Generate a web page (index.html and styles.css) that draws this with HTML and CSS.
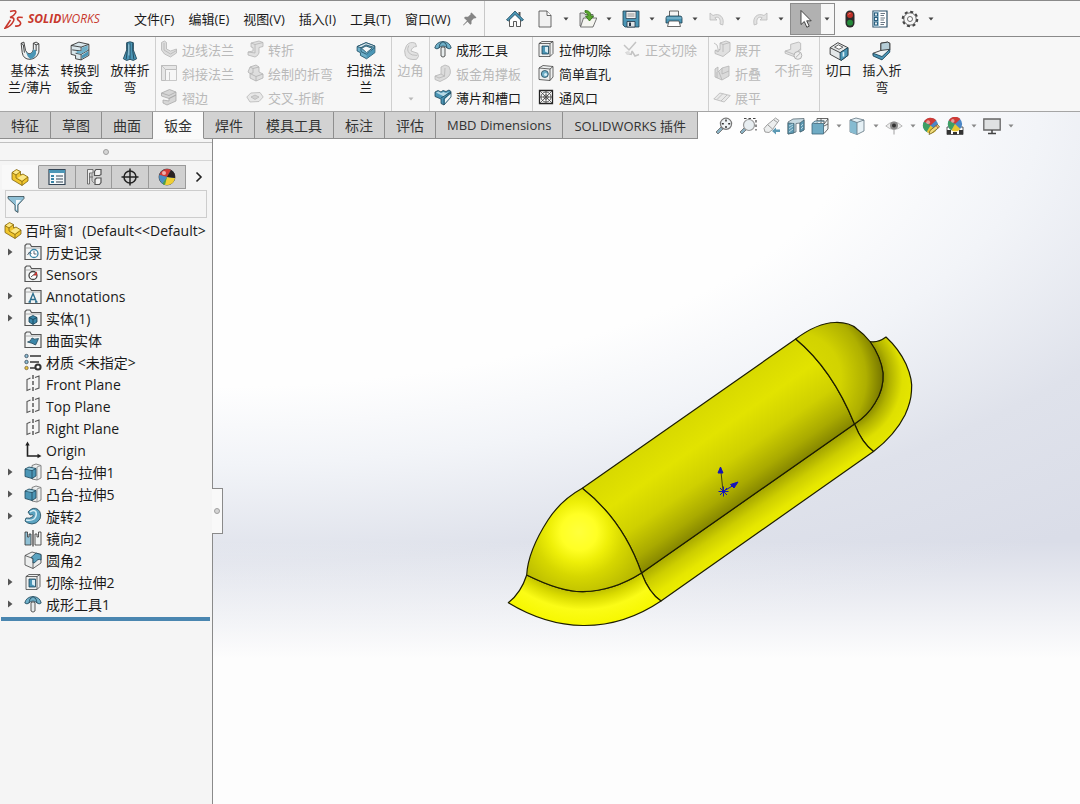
FILE: index.html
```html
<!DOCTYPE html>
<html lang="zh-CN">
<head>
	<meta charset="utf-8">
	<meta name="viewport" content="width=device-width, initial-scale=1">
	<title>SOLIDWORKS</title>
	<link rel="stylesheet" href="styles.css">
</head>
<body>
	<!-- icon sprite -->
	<svg class="sprite" aria-hidden="true">
		<symbol id="caret" viewBox="0 0 8 8"><path d="M1.500 2.500h5L4 5.500z" fill="currentColor"/></symbol>
		<symbol id="expand" viewBox="0 0 8 8"><path d="M2 .5v7L6.500 4z" fill="#555"/></symbol>

		<symbol id="pin" viewBox="0 0 18 18"><path d="M10.500 2.500l5 5-1.500 1-1-.2-2.500 2.500v3l-1.200 1-2.800-3L2.500 15.500 2 15l4-4.200-3-2.800 1-1.300h3L9.700 4.300 9.500 3.300z" fill="#858585"/></symbol>
		<symbol id="home" viewBox="0 0 18 18"><path d="M3.500 9v7.500h4v-5h3v5h4V9L9 3.500z" fill="#fff" stroke="#333"/><path d="M12.500 2h2v4.500l-2-2z" fill="#555"/><path d="M.5 9.800L9 1l8.500 8.800-1.800 1.200L9 4.500 2.300 11z" fill="#4b96b6" stroke="#1d475c"/></symbol>
		<symbol id="doc" viewBox="0 0 18 18"><path d="M3 1h8l4 4.500V17H3z" fill="#f1f1f1" stroke="#444"/><path d="M11 1v4.500h4" fill="#fff" stroke="#444"/></symbol>
		<symbol id="open" viewBox="0 0 18 18"><path d="M1 3h4l1 1.500h8V16H1z" fill="#ddd" stroke="#555"/><path d="M4.500 8h13.300L14 17H1.500z" fill="#f5f5f0" stroke="#555"/><path d="M6 .5c4 0 6 2 6 5.500h2.500L10.500 11 6.500 6H9c0-2-1-3-3-3.500z" fill="#5aa62e" stroke="#2f6f14"/></symbol>
		<symbol id="save" viewBox="0 0 18 18"><path d="M1 1h16v16H3l-2-2z" fill="#4b96b6" stroke="#1d3c4c"/><path d="M4 1.500h10v7H4z" fill="#f2f2f2" stroke="#345"/><path d="M5.500 4h7M5.500 6h7" stroke="#777"/><path d="M5 11.500h8V17H5z" fill="#dce3e6" stroke="#234"/><path d="M7 12.500h2V16H7z" fill="#234"/></symbol>
		<symbol id="print" viewBox="0 0 18 18"><path d="M4.500 1h9v6h-9z" fill="#f4f4f4" stroke="#444"/><path d="M1 8q0-2 2-2h12q2 0 2 2v5H1z" fill="#4b96b6" stroke="#1d3c4c"/><path d="M1.500 8h15" stroke="#a7d0e0"/><path d="M4 11h10l1.500 5.500h-13z" fill="#fff" stroke="#444"/></symbol>
		<symbol id="undo" viewBox="0 0 18 18"><path d="M2 3v7h7L6.800 7.800C10 6 13 8 12 14l2.800 1C17 7 11 2.500 5 5.500z" fill="#e2e2e2" stroke="#bbb"/></symbol>
		<symbol id="redo" viewBox="0 0 18 18"><path d="M16 3v7H9l2.200-2.200C8 6 5 8 6 14l-2.800 1C1 7 7 2.500 13 5.500z" fill="#e2e2e2" stroke="#bbb"/></symbol>
		<symbol id="cursor" viewBox="0 0 18 18"><path d="M4 .5v14l3.300-3 2.500 5.700 2.400-1-2.500-5.400h4.500z" fill="#fff" stroke="#222"/></symbol>
		<symbol id="traffic" viewBox="0 0 18 18"><rect x="4.500" y=".5" width="9" height="17" rx="4.500" fill="#2a2a2a"/><circle cx="9" cy="5" r="3" fill="#c03028"/><circle cx="9" cy="12.800" r="3" fill="#258a3a"/><path d="M7.500 4.500a1.800 1.800 0 012-1" stroke="#eba39e" fill="none"/></symbol>
		<symbol id="options" viewBox="0 0 18 18"><path d="M2 1h14v16H2z" fill="#fff" stroke="#2b4f68" stroke-width="1.200"/><path d="M2.500 1.500h5.500v15H2.500z" fill="#a8cfe0"/><path d="M3.500 3h3v3h-3zM3.500 7.500h3v3h-3zM3.500 12h3v3h-3z" fill="#fff" stroke="#2b5f7e" stroke-width="1.200"/><path d="M9.500 3.500H14M9.500 5.500H13M9.500 8H14M9.500 10H13M9.500 12.500H14M9.500 14.500H13" stroke="#456"/></symbol>
		<symbol id="gear" viewBox="0 0 18 18"><circle cx="9" cy="9" r="7.200" fill="none" stroke="#444" stroke-width="2.200" stroke-dasharray="3 2.650"/><circle cx="9" cy="9" r="6.200" fill="#f7f7f7" stroke="#444"/><circle cx="9" cy="9" r="2.500" fill="#fff" stroke="#444"/></symbol>

		<symbol id="base-flange" viewBox="0 0 18 18"><path d="M1 2l2.500-1L5 8.500q1.500 3.500 4 3 3-1 3-4V2l2.500-1L17 2.500V10q-2 6-8 6.500-6 0-7-6z" fill="#eef2f3" stroke="#333"/><path d="M5 9q2 3.500 4 2.500 3-1 3-4l2.500 1q.5 6-5 8L7 14z" fill="#4b96b6"/><path d="M12 2l2.500 1.500V9M14.500 3.500L17 2.500M1 2l2 1.500 1 7" fill="none" stroke="#333"/></symbol>
		<symbol id="convert" viewBox="0 0 18 18"><path d="M1 4l7-3 9 2v10l-7 4-5-1v-3l-4-1z" fill="#d9e6eb" stroke="#333"/><path d="M1 4l9 1.500 7-2.500M10 5.500V9L2 8M5 11l5 1 7-4M10 12v5" fill="none" stroke="#333"/><path d="M10.500 6l5.500-2v4l-5.500 3.500L6 11v-2h4.500z" fill="#6fb0c9"/><path d="M10.500 13l6-4v3.500l-6 3.500z" fill="#4b96b6"/></symbol>
		<symbol id="loft" viewBox="0 0 18 18"><path d="M6 1.500q3-1.500 6 0V8l3 8-3 1.500-3-1-3 1L3 16l3-8z" fill="#4b96b6" stroke="#1f4558"/><path d="M6.500 2v7l-1 7.500M9 2v14M11.500 2v7l1 7.500" stroke="#1f4558" fill="none"/><path d="M8 3v10" stroke="#b9dbe7"/></symbol>
		<symbol id="swept" viewBox="0 0 18 18"><path d="M1 5l8-3.500 8 3v6L9.500 16 4 13v-2.500L1 9z" fill="#6fb0c9" stroke="#24556b"/><path d="M1 5l8-3.500 8 3-1.500 1-6.500-2L4.500 6z" fill="#dcebf1" stroke="#24556b"/><path d="M4.500 6v3.500l5 2.500 7.500-6" fill="none" stroke="#24556b"/><path d="M5 6.500l4-2 5.500 2-5 4z" fill="#f4f8f9" stroke="#24556b"/><path d="M9.500 12l7-5v3.500l-7 5z" fill="#4b96b6"/></symbol>
		<symbol id="forming" viewBox="0 0 18 18"><path d="M.8 8Q2 2 9 1.500 16 2 17.200 8q-2 1.800-4.200 0-1.500-2-4-2T5 8Q3 9.800.8 8z" fill="#6fb0c9" stroke="#1f4558"/><path d="M5 8q0-5 4-6.300Q13 3 13 8" fill="none" stroke="#1f4558"/><path d="M7 7.500q2-1.200 4 0V16q-2 2.300-4 0z" fill="#e6ebec" stroke="#333"/></symbol>
		<symbol id="tab-slot" viewBox="0 0 18 18"><path d="M1 4l3-1.500L7 4l2-1.500 3 1L15 2l2 1.500V9l-7 8-3-1.500V11L1 8.500z" fill="#4b96b6" stroke="#1f4558"/><path d="M2 4.500l2.500-1L7 5l2.500-1 2.500 1 3-1.500-5 5z" fill="#b7d9e6"/><path d="M7 10l10-6M10 10.500V17M10 10.500L17 5" stroke="#1f4558" fill="none"/><path d="M11 11l5.500-5v3L11 15z" fill="#f0f4f5"/></symbol>
		<symbol id="cut-extrude" viewBox="0 0 18 18"><path d="M2 3.500L5 1.500h11v12l-3 3H2z" fill="#eef0f0" stroke="#444"/><path d="M2 3.500h11v13M13 3.500l3-2" fill="none" stroke="#444"/><path d="M5 6h6.500v8H5z" fill="#4b96b6" stroke="#1f4558"/><path d="M8 7h3v6L8 11.500z" fill="#d8eef6"/></symbol>
		<symbol id="hole" viewBox="0 0 18 18"><path d="M2 4l4-2.500 10 1V13l-3 3.500-11-1z" fill="#eef0f0" stroke="#444"/><path d="M2 4l11 1v11.500M13 5l3-2.500" fill="none" stroke="#444"/><circle cx="7.800" cy="10" r="3.500" fill="#6fb0c9" stroke="#1f4558"/><circle cx="8.600" cy="10.500" r="1.500" fill="#d8eef6"/></symbol>
		<symbol id="vent" viewBox="0 0 18 18"><path d="M2.500 2.500h13v13h-13z" fill="#fff" stroke="#222" stroke-width="1.300"/><circle cx="9" cy="9" r="5" fill="none" stroke="#333"/><circle cx="9" cy="9" r="2.200" fill="none" stroke="#333"/><path d="M2.500 9h13M9 2.500v13M2.500 2.500l13 13M15.500 2.500l-13 13" stroke="#444"/></symbol>
		<symbol id="rip" viewBox="0 0 18 18"><path d="M1 6l7-4.500L17 6v7l-6 4.500L1 12z" fill="#e4e7e8" stroke="#333"/><path d="M1 6l9 4.500L17 6" fill="none" stroke="#333"/><path d="M10 10.500L17 6v7l-6 4.500-1-1z" fill="#4b96b6" stroke="#1f4558"/><path d="M5 5.500l3.500-2 4 2-3.500 2z" fill="#fff" stroke="#555"/><path d="M13 10v4" stroke="#d8eef6" stroke-width="1.500"/></symbol>
		<symbol id="insert-bend" viewBox="0 0 18 18"><path d="M8 2l6-1 2 1v6l-7 8-8-3.500V11l7-2.500z" fill="#f0f3f4" stroke="#333"/><path d="M8 2l6-1 2 1v5.500L8 8.500z" fill="#b5cdd7" stroke="#333"/><path d="M1 11l8 3 7-6.500V10l-7 7-8-3.500z" fill="#4b96b6" stroke="#1f4558"/></symbol>

		<!-- greyed commands -->
		<symbol id="d-edge" viewBox="0 0 18 18"><path d="M1.500 2.500l3-1.500 2 1.500V9l4 2 6-2v4l-6 4-6-3-3-4z" fill="#dcdcdc" stroke="#b5b5b5"/><path d="M4 3v7l6.500 4 6-3.500" stroke="#b5b5b5" fill="none"/></symbol>
		<symbol id="d-miter" viewBox="0 0 18 18"><path d="M1.500 1.500h15v4h-11v11h-4z" fill="#e6e6e6" stroke="#b0b0b0"/><path d="M1.500 1.500l4 4M9.500 8v8.500M16.500 5.500v11h-11" stroke="#bbb" fill="none"/></symbol>
		<symbol id="d-hem" viewBox="0 0 18 18"><path d="M1.500 5l8-3.500L16 4v3l-7 3.500L1.500 8zM9 10.500L16 7v6l-9 4-4-2v-3l6 1z" fill="#d6d6d6" stroke="#aaa"/><path d="M1.500 5L9 7.500 16 4" stroke="#aaa" fill="none"/></symbol>
		<symbol id="d-jog" viewBox="0 0 18 18"><path d="M5 3l8-2 4 1.500v4l-4 1V13q-1 3-4 4l-7-2v-3l5-1V7.500L5 7z" fill="#e0e0e0" stroke="#b5b5b5"/><path d="M5 3l4 1.500L17 2.500M9 4.500V13l-7-1" stroke="#b5b5b5" fill="none"/></symbol>
		<symbol id="d-sketch" viewBox="0 0 18 18"><path d="M4 3l6-2 3 2v5l4 2v4l-7 3-6-3V9.500L2 8z" fill="#dedede" stroke="#b0b0b0"/><path d="M4 3l3 1.500L13 3M7 4.500V9l-3 .5 6 3 7-2.500M10 12.500V17" stroke="#b0b0b0" fill="none"/></symbol>
		<symbol id="d-break" viewBox="0 0 18 18"><path d="M.8 9l4-4L14 4.500 17.200 9 13 13.500l-9 .5z" fill="#e8e8e8" stroke="#b8b8b8"/><path d="M5 9l4-2 4 2-4 2.500z" fill="#d2d2d2" stroke="#b8b8b8"/></symbol>
		<symbol id="d-corner" viewBox="0 0 18 18"><path d="M5 4q3-4 8-2l1 3q-4 0-5 4l6 2q2 3-1 5.500-7 1-10-3-2-5 1-9.500z" fill="#e2e2e2" stroke="#bbb"/><path d="M7 4q-3 6 3 8.500l4.500.5" stroke="#bbb" fill="none"/></symbol>
		<symbol id="d-gusset" viewBox="0 0 18 18"><path d="M1 12l6-2V3l4-2 4 1.500q4 8-3 12L6 17.500l-5-2z" fill="#dcdcdc" stroke="#b5b5b5"/><path d="M7 10l3.500 2L11 4M1 12l4 2 6-2" stroke="#b5b5b5" fill="none"/></symbol>
		<symbol id="d-normal" viewBox="0 0 18 18"><path d="M1 5l5 5 7-8M3 12q1 3 5 2M9 11l3 5 4-1.500M9 11l-1 4" fill="none" stroke="#c4c4c4" stroke-width="1.500"/><circle cx="5" cy="13" r="2" fill="#ddd"/></symbol>
		<symbol id="d-unfold" viewBox="0 0 18 18"><path d="M7 3l6-2 4 1.500V11l-7 5.500-8-3v-3l5-1z" fill="#e0e0e0" stroke="#b5b5b5"/><path d="M7 3l3 1.500L17 2.500M10 4.500V12M1 3q4 1 4 6M2 10l3 2 2-3" stroke="#b5b5b5" fill="none"/></symbol>
		<symbol id="d-fold" viewBox="0 0 18 18"><path d="M2 5l3-2v5l4-4 7-2v10l-7 4-7-3z" fill="#dadada" stroke="#b5b5b5"/><path d="M9 4v6l7-3M4 8v6M6 8l3 8" stroke="#b5b5b5" fill="none"/></symbol>
		<symbol id="d-flat" viewBox="0 0 18 18"><path d="M.8 11l6-6 10.400 2.500-6 6.500z" fill="#e9e9e9" stroke="#b8b8b8"/><path d="M4 11.500l6-6M8 13l6-6" stroke="#b8b8b8"/></symbol>
		<symbol id="d-nobend" viewBox="0 0 18 18"><path d="M6 3l7-2 2 1v6l-6 6-8-3v-2l5-1.500z" fill="#e4e4e4" stroke="#b8b8b8"/><path d="M1 9l8 3 6-5" stroke="#b8b8b8" fill="none"/><circle cx="12.500" cy="13" r="3.500" fill="#eee" stroke="#aaa"/><path d="M10.500 15l4-4" stroke="#aaa"/></symbol>

		<!-- view toolbar -->
		<symbol id="zoom-fit" viewBox="0 0 18 18"><path d="M1 15l5-5 2 2-5 5z" fill="#8ab2c4" stroke="#666"/><circle cx="11" cy="6.800" r="5.600" fill="#eef3f5" stroke="#777" stroke-width="1.200"/><path d="M11 2.500v2M11 9v2M6.800 6.800h2M13.200 6.800h2" stroke="#333" stroke-width="1.500"/></symbol>
		<symbol id="zoom-area" viewBox="0 0 18 18"><path d="M5 1.500h12v12" fill="none" stroke="#444" stroke-width="1.200" stroke-dasharray="2.500 2"/><path d="M1 15l4-4 2 2-4 4z" fill="#8ab2c4" stroke="#666"/><circle cx="10" cy="8" r="5.500" fill="#e8eef1" stroke="#999" stroke-width="1.200"/></symbol>
		<symbol id="prev-view" viewBox="0 0 18 18"><path d="M12.500 1l3.500 2.500-6.500 9-3.500 3-4-.5-1-3.500 3-3.500z" fill="#eceeee" stroke="#888"/><path d="M5 8l4.500 4M11 3l3.500 2.500" stroke="#888"/><path d="M17 12.500h-4v-2L9 14l4 3.500v-2.500h4z" fill="#5d9ab4"/></symbol>
		<symbol id="section" viewBox="0 0 18 18"><path d="M1 5l5-3 11-.5V13l-4 2V6L9 6.500V15l-8 2z" fill="#c9dbe3" stroke="#5b6b73"/><path d="M1 6l6 .5V16l-6 1zM13 6l4-3v10l-4 2z" fill="#5d9ab4" stroke="#446472"/><path d="M2 9l4-2M2 12l4-3M2 15l4-3M14 9l2-2M14 12l2-2" stroke="#cfe5ee"/></symbol>
		<symbol id="orient" viewBox="0 0 18 18"><path d="M6 6V1.500h11V12l-4 4.500" fill="#f2f5f6" stroke="#444"/><path d="M6 4h7v3M10 1.500V6M13 7l4-5M13 9l4-2" stroke="#444" fill="none"/><path d="M1 6.500h11.500V17H1z" fill="#6fabc4" stroke="#3c6578"/><path d="M1 6.500L4 4h9.500" stroke="#3c6578" fill="#b7d9e6"/></symbol>
		<symbol id="display" viewBox="0 0 18 18"><path d="M2 3l6-2 8 2v11l-7 3.500L2 15z" fill="#e6f1f6" stroke="#5f7480"/><path d="M2 3l7 2.500V17.500L2 15z" fill="#86bbd1"/><path d="M2 3l7 2.500L16 3M9 5.500v12" fill="none" stroke="#5f7480"/></symbol>
		<symbol id="eye" viewBox="0 0 18 18"><path d="M.8 9Q9 1 17.200 9 9 16 .8 9z" fill="#eee" stroke="#aaa"/><circle cx="9" cy="8.500" r="4" fill="#8a8a8a"/><circle cx="9" cy="8.500" r="2" fill="#333"/><path d="M9 12.500v5" stroke="#888"/></symbol>
		<symbol id="ball" viewBox="0 0 18 18"><circle cx="9" cy="9" r="8" fill="#4b86c6"/><path d="M9 9L2 5a8 8 0 0113-1.500z" fill="#cf3b36"/><path d="M9 9L2 5a8 8 0 003 11z" fill="#3e9e63"/><path d="M9 9L5 16a8 8 0 0010-1.500z" fill="#e9c62f"/><circle cx="6.500" cy="5.500" r="2" fill="#fff" fill-opacity=".5"/></symbol>
		<symbol id="edit-look" viewBox="0 0 18 18"><use href="#ball" width="17" height="17"/><path d="M7 17.500l1-4 7.500-6 2 2.500-7.500 6z" fill="#f1dc7a" stroke="#6b5a24"/><path d="M14 8.500l2 2.500" stroke="#b33"/></symbol>
		<symbol id="scene" viewBox="0 0 18 18"><path d="M1 10h16v7.500H1z" fill="#fff" stroke="#333"/><path d="M1 13h4v4H1zM13 13h4v4h-4zM7 15h4v2.500H7z" fill="#333"/><use href="#ball" x="1" y="-1" width="16" height="16"/></symbol>
		<symbol id="monitor" viewBox="0 0 18 18"><path d="M.8 2h16.400v11H.8z" fill="#dfe1e2" stroke="#666" stroke-width="1.300"/><path d="M9 13v3.500M5 16.500h8" stroke="#444" stroke-width="1.500"/></symbol>

		<!-- feature tree -->
		<symbol id="part" viewBox="0 0 18 18"><path d="M1 4.500L5.500 1.500l4 2V7l2.500-1 5 3v4l-6 4.500-10-6z" fill="#f1c62d" stroke="#7d6312"/><path d="M1 4.500L5 7l4.500-3.500M5 7v3l6 3.500L17 9M11 13.500v4" fill="none" stroke="#7d6312"/><path d="M2 4.500l3.500-2.200L8.500 3.700 5 6.300zM6.500 10L12 6.700 15.800 9 11 12.600z" fill="#fbe88b"/></symbol>
		<symbol id="props" viewBox="0 0 18 18"><path d="M1 1.500h16v15H1z" fill="#f5f9fb" stroke="#345" stroke-width="1.200"/><path d="M1 2h16v3H1z" fill="#4b96b6"/><path d="M3 7h3v2H3zM3 10h3v2H3zM3 13h3v2H3z" fill="#3b86a8"/><path d="M8 8h7M8 11h7M8 14h7" stroke="#345" stroke-width="1.200"/></symbol>
		<symbol id="config" viewBox="0 0 18 18"><path d="M2.500 1.500H8V5H4.500v11H2.500zM4.500 9H8" fill="#eee" stroke="#555"/><path d="M9.500 3.500l1.500-2h5v5l-1.500 1h-5zM10 11.500l1.500-1.500H16v4.500L14.500 16.500H10z" fill="#f2f2f2" stroke="#555" stroke-width="1.200"/><path d="M7 6v7l2 2" stroke="#777" fill="none"/></symbol>
		<symbol id="dimx" viewBox="0 0 18 18"><circle cx="9" cy="9" r="6" fill="none" stroke="#222" stroke-width="1.500"/><path d="M9 .5v17M.5 9h17" stroke="#222" stroke-width="1.500"/></symbol>
		<symbol id="appearance" viewBox="0 0 18 18"><circle cx="9" cy="9" r="8" fill="#3c78b4" stroke="#444"/><path d="M9 9L1.500 7A8 8 0 0113 2z" fill="#d23a35"/><path d="M9 9L1.500 7A8 8 0 006 16.400z" fill="#4a8ec4"/><path d="M9 9l-3 7.400A8 8 0 0017 10z" fill="#f0cf34"/><path d="M9 9l-4.500 6.500A8 8 0 007 17z" fill="#4aa04b"/><path d="M9 9l4-7A8 8 0 0117 10z" fill="#2a2222"/><circle cx="6" cy="5" r="2" fill="#fff" fill-opacity=".6"/></symbol>
		<symbol id="filter" viewBox="0 0 18 18"><path d="M1 1.500h16v2L11 10v7.500l-3-2V10L1 3.500z" fill="#8fc0d6" stroke="#33474f"/><path d="M9 5h5l-4 4.500V15l-1-.5z" fill="#f4f9fb"/></symbol>
		<symbol id="folder" viewBox="0 0 18 18"><path d="M1 16.500v-14L2.500 1H6l1.500 2.500H17v13z" fill="#f2f4f4" stroke="#555" stroke-width="1.200"/><path d="M1.500 5H17" stroke="#999"/></symbol>
		<symbol id="f-history" viewBox="0 0 18 18"><use href="#folder"/><circle cx="10" cy="10.500" r="4" fill="#fff" stroke="#3b86a8" stroke-width="1.300"/><path d="M10 8v3h2.500M3.500 12l2-3 2 2" stroke="#345" fill="none"/></symbol>
		<symbol id="f-sensor" viewBox="0 0 18 18"><use href="#folder"/><circle cx="9" cy="10.500" r="4" fill="#fff" stroke="#444" stroke-width="1.300"/><path d="M9 10.500l4-4v4z" fill="#c9302c"/><path d="M7 12l4-3.500" stroke="#333"/></symbol>
		<symbol id="f-note" viewBox="0 0 18 18"><use href="#folder"/><path d="M5.500 15L9 6.500 12.500 15M6.500 12.500h5M4.500 15h2.500M11 15h2.500" fill="none" stroke="#2d6f8f" stroke-width="1.400"/></symbol>
		<symbol id="f-solid" viewBox="0 0 18 18"><use href="#folder"/><path d="M5 8.500L9 6.500l4 2V13l-4 2.500L5 13z" fill="#3b86a8" stroke="#123c50"/><path d="M5 8.500l4 2 4-2M9 10.500v5" stroke="#123c50" fill="none"/></symbol>
		<symbol id="f-surface" viewBox="0 0 18 18"><use href="#folder"/><path d="M3.500 11q3 0 4.500-4 2 2 6.500.500-1 3-3 6.500-3-2-8-3z" fill="#3b86a8" stroke="#1f4558"/></symbol>
		<symbol id="material" viewBox="0 0 18 18"><circle cx="2.500" cy="3" r="1.700" fill="#8fc0d6" stroke="#345"/><circle cx="2.500" cy="9" r="1.700" fill="#8fc0d6" stroke="#345"/><circle cx="2.500" cy="15" r="1.700" fill="#e8c23a" stroke="#764"/><path d="M6 3h11M6 9h9M6 15h5" stroke="#333" stroke-width="1.500"/><circle cx="14" cy="14" r="2.600" fill="#fff" stroke="#333" stroke-width="2"/></symbol>
		<symbol id="plane" viewBox="0 0 18 18"><path d="M6.500 3L3 4.500v11L6.500 14M11 2.500l4-1.500v12l-4 1.500" fill="none" stroke="#555" stroke-width="1.100"/><path d="M9 0v18" stroke="#333" stroke-width="1.200" stroke-dasharray="4 2"/></symbol>
		<symbol id="origin" viewBox="0 0 18 18"><path d="M3.500 3v12H15" fill="none" stroke="#222" stroke-width="1.600"/><path d="M3.500 .5l2.200 4H1.300zM17.500 15l-4 2.200v-4.400z" fill="#222"/></symbol>
		<symbol id="boss" viewBox="0 0 18 18"><path d="M8 2.500L12 1l5 1.500V15l-4 2-5-1z" fill="#eceeee" stroke="#666"/><path d="M13 4l4-1.500M13 4v13" stroke="#888"/><path d="M1 6l4-2 7 1.500V13l-4 2.500L1 13.500z" fill="#4b96b6" stroke="#1f4558"/><path d="M1 6l7 1.500 4-2M8 7.500v8" stroke="#1f4558" fill="none"/><path d="M2 6l3-1.300 5.500 1L8 7z" fill="#9ccbdd"/></symbol>
		<symbol id="revolve" viewBox="0 0 18 18"><path d="M4 5Q9-1 14 2.500 18 6 16 12q-3 5-8 5-5-.5-7-3l1-3q4 1 7-1.500Q10 7 6 8z" fill="#5ba3c0" stroke="#1f4558"/><path d="M6 5q4-3 6 0 1 4-2 7-3 2-8 1" fill="none" stroke="#d8eef6" stroke-width="1.500"/></symbol>
		<symbol id="mirror" viewBox="0 0 18 18"><path d="M1 3h2.500v5H5V5h2v11H1z" fill="#8fbfd3" stroke="#333"/><path d="M17 3h-2.500v5H13V5h-2v11h6z" fill="#f2f4f4" stroke="#333"/><path d="M9 1v16.500" stroke="#222" stroke-width="1.100"/></symbol>
		<symbol id="fillet" viewBox="0 0 18 18"><path d="M1 4.500L8 1l9 2.500V12l-8 5.500L1 14z" fill="#eceeee" stroke="#444"/><path d="M1 4.500l8 3V17.500" fill="none" stroke="#444"/><path d="M7 6.500L12 2l5 1.500V9q-3-2-6 2.500L9 12V7.500z" fill="#5ba3c0" stroke="#1f4558"/></symbol>
	</svg>

	<header class="menubar">
		<div class="logo">
			<svg viewBox="4 5 20 20" aria-hidden="true"><path d="M10 7.500Q17 5.500 15.500 9Q14 12 10 13.500Q15 13 13.500 17Q11 22.500 5 24.200L10.500 16M22.800 13.500Q17 12.500 17.500 15C18 17 21.500 17.500 20.500 20Q19.500 22.500 15 22" fill="none" stroke="#c8372d" stroke-width="1.600"/></svg>
			<span><b>SOLID</b>WORKS</span>
		</div>
		<nav class="menus">
			<button>文件(F)</button>
			<button>编辑(E)</button>
			<button>视图(V)</button>
			<button>插入(I)</button>
			<button>工具(T)</button>
			<button>窗口(W)</button>
		</nav>
		<button class="pin" aria-label="Pin"><svg class="icon"><use href="#pin"/></svg></button>
		<div class="quick">
			<button class="tool" aria-label="Home"><svg class="icon"><use href="#home"/></svg></button>
			<button class="tool" aria-label="New"><svg class="icon"><use href="#doc"/></svg></button>
			<button class="drop" aria-label="New options"><svg><use href="#caret"/></svg></button>
			<button class="tool" aria-label="Open"><svg class="icon"><use href="#open"/></svg></button>
			<button class="drop" aria-label="Open options"><svg><use href="#caret"/></svg></button>
			<button class="tool" aria-label="Save"><svg class="icon"><use href="#save"/></svg></button>
			<button class="drop" aria-label="Save options"><svg><use href="#caret"/></svg></button>
			<button class="tool" aria-label="Print"><svg class="icon"><use href="#print"/></svg></button>
			<button class="drop" aria-label="Print options"><svg><use href="#caret"/></svg></button>
			<button class="tool" aria-label="Undo" disabled><svg class="icon"><use href="#undo"/></svg></button>
			<button class="drop" aria-label="Undo list"><svg><use href="#caret"/></svg></button>
			<button class="tool" aria-label="Redo" disabled><svg class="icon"><use href="#redo"/></svg></button>
			<button class="drop" aria-label="Redo list"><svg><use href="#caret"/></svg></button>
			<div class="select-tool">
				<button class="tool pressed" aria-label="Select" aria-pressed="true"><svg class="icon"><use href="#cursor"/></svg></button>
				<button class="drop" aria-label="Select options"><svg><use href="#caret"/></svg></button>
			</div>
			<button class="tool" aria-label="Rebuild"><svg class="icon"><use href="#traffic"/></svg></button>
			<button class="tool" aria-label="File properties"><svg class="icon"><use href="#options"/></svg></button>
			<button class="tool" aria-label="Options"><svg class="icon"><use href="#gear"/></svg></button>
			<button class="drop" aria-label="More options"><svg><use href="#caret"/></svg></button>
		</div>
	</header>

	<div class="ribbon">
		<div class="group first">
			<button class="big"><svg class="icon-lg"><use href="#base-flange"/></svg>基体法<br>兰/薄片</button>
			<button class="big"><svg class="icon-lg"><use href="#convert"/></svg>转换到<br>钣金</button>
			<button class="big"><svg class="icon-lg"><use href="#loft"/></svg>放样折<br>弯</button>
		</div>
		<div class="group">
			<div class="col">
				<button class="small" disabled><svg class="icon"><use href="#d-edge"/></svg>边线法兰</button>
				<button class="small" disabled><svg class="icon"><use href="#d-miter"/></svg>斜接法兰</button>
				<button class="small" disabled><svg class="icon"><use href="#d-hem"/></svg>褶边</button>
			</div>
			<div class="col">
				<button class="small" disabled><svg class="icon"><use href="#d-jog"/></svg>转折</button>
				<button class="small" disabled><svg class="icon"><use href="#d-sketch"/></svg>绘制的折弯</button>
				<button class="small" disabled><svg class="icon"><use href="#d-break"/></svg>交叉-折断</button>
			</div>
			<button class="big"><svg class="icon-lg"><use href="#swept"/></svg>扫描法<br>兰</button>
		</div>
		<div class="group">
			<button class="big narrow" disabled><svg class="icon-lg"><use href="#d-corner"/></svg>边角<svg class="more"><use href="#caret"/></svg></button>
		</div>
		<div class="group">
			<div class="col">
				<button class="small"><svg class="icon"><use href="#forming"/></svg>成形工具</button>
				<button class="small" disabled><svg class="icon"><use href="#d-gusset"/></svg>钣金角撑板</button>
				<button class="small"><svg class="icon"><use href="#tab-slot"/></svg>薄片和槽口</button>
			</div>
		</div>
		<div class="group">
			<div class="col">
				<button class="small"><svg class="icon"><use href="#cut-extrude"/></svg>拉伸切除</button>
				<button class="small"><svg class="icon"><use href="#hole"/></svg>简单直孔</button>
				<button class="small"><svg class="icon"><use href="#vent"/></svg>通风口</button>
			</div>
			<div class="col">
				<button class="small" disabled><svg class="icon"><use href="#d-normal"/></svg>正交切除</button>
			</div>
		</div>
		<div class="group">
			<div class="col">
				<button class="small" disabled><svg class="icon"><use href="#d-unfold"/></svg>展开</button>
				<button class="small" disabled><svg class="icon"><use href="#d-fold"/></svg>折叠</button>
				<button class="small" disabled><svg class="icon"><use href="#d-flat"/></svg>展平</button>
			</div>
			<button class="big" disabled><svg class="icon-lg"><use href="#d-nobend"/></svg>不折弯</button>
		</div>
		<div class="group">
			<button class="big narrow"><svg class="icon-lg"><use href="#rip"/></svg>切口</button>
			<button class="big"><svg class="icon-lg"><use href="#insert-bend"/></svg>插入折<br>弯</button>
		</div>
	</div>

	<main class="workspace">
		<div class="tabrow">
			<div class="tabs" role="tablist">
				<button role="tab">特征</button>
				<button role="tab">草图</button>
				<button role="tab">曲面</button>
				<button role="tab" class="active" aria-selected="true">钣金</button>
				<button role="tab">焊件</button>
				<button role="tab">模具工具</button>
				<button role="tab">标注</button>
				<button role="tab">评估</button>
				<button role="tab" class="latin">MBD Dimensions</button>
				<button role="tab" class="latin">SOLIDWORKS 插件</button>
			</div>
			<div class="viewbar">
				<button aria-label="Zoom to fit"><svg class="icon"><use href="#zoom-fit"/></svg></button>
				<button aria-label="Zoom to area"><svg class="icon"><use href="#zoom-area"/></svg></button>
				<button aria-label="Previous view"><svg class="icon"><use href="#prev-view"/></svg></button>
				<button aria-label="Section view"><svg class="icon"><use href="#section"/></svg></button>
				<button aria-label="View orientation"><svg class="icon"><use href="#orient"/></svg></button>
				<button class="drop" aria-label="Orientations"><svg><use href="#caret"/></svg></button>
				<button aria-label="Display style"><svg class="icon"><use href="#display"/></svg></button>
				<button class="drop" aria-label="Display styles"><svg><use href="#caret"/></svg></button>
				<button aria-label="Hide or show items"><svg class="icon"><use href="#eye"/></svg></button>
				<button class="drop" aria-label="Item types"><svg><use href="#caret"/></svg></button>
				<button aria-label="Edit appearance"><svg class="icon"><use href="#edit-look"/></svg></button>
				<button aria-label="Apply scene"><svg class="icon"><use href="#scene"/></svg></button>
				<button class="drop" aria-label="Scenes"><svg><use href="#caret"/></svg></button>
				<button aria-label="View settings"><svg class="icon"><use href="#monitor"/></svg></button>
				<button class="drop" aria-label="View settings list"><svg><use href="#caret"/></svg></button>
			</div>
		</div>

		<div class="body">
			<aside class="sidebar">
				<div class="grip"><i class="dot"></i></div>
				<div class="panel-tabs">
					<button class="active" aria-label="Feature tree"><svg class="icon"><use href="#part"/></svg></button>
					<button aria-label="Properties"><svg class="icon"><use href="#props"/></svg></button>
					<button aria-label="Configurations"><svg class="icon"><use href="#config"/></svg></button>
					<button aria-label="Dimensions"><svg class="icon"><use href="#dimx"/></svg></button>
					<button aria-label="Appearances"><svg class="icon"><use href="#appearance"/></svg></button>
					<button class="next" aria-label="More tabs"><svg viewBox="0 0 8 12"><path d="M1.500 1.500L6 6l-4.500 4.500" fill="none" stroke="#222" stroke-width="1.600"/></svg></button>
				</div>
				<label class="filter">
					<svg class="icon"><use href="#filter"/></svg>
					<input type="text" aria-label="Filter">
				</label>
				<ul class="tree">
					<li class="root"><svg class="icon"><use href="#part"/></svg>百叶窗1&nbsp; (Default&lt;&lt;Default&gt;</li>
					<li><button aria-label="Expand"><svg><use href="#expand"/></svg></button><svg class="icon"><use href="#f-history"/></svg>历史记录</li>
					<li><svg class="icon"><use href="#f-sensor"/></svg>Sensors</li>
					<li><button aria-label="Expand"><svg><use href="#expand"/></svg></button><svg class="icon"><use href="#f-note"/></svg>Annotations</li>
					<li><button aria-label="Expand"><svg><use href="#expand"/></svg></button><svg class="icon"><use href="#f-solid"/></svg>实体(1)</li>
					<li><svg class="icon"><use href="#f-surface"/></svg>曲面实体</li>
					<li><svg class="icon"><use href="#material"/></svg>材质 &lt;未指定&gt;</li>
					<li><svg class="icon"><use href="#plane"/></svg>Front Plane</li>
					<li><svg class="icon"><use href="#plane"/></svg>Top Plane</li>
					<li><svg class="icon"><use href="#plane"/></svg>Right Plane</li>
					<li><svg class="icon"><use href="#origin"/></svg>Origin</li>
					<li><button aria-label="Expand"><svg><use href="#expand"/></svg></button><svg class="icon"><use href="#boss"/></svg>凸台-拉伸1</li>
					<li><button aria-label="Expand"><svg><use href="#expand"/></svg></button><svg class="icon"><use href="#boss"/></svg>凸台-拉伸5</li>
					<li><button aria-label="Expand"><svg><use href="#expand"/></svg></button><svg class="icon"><use href="#revolve"/></svg>旋转2</li>
					<li><svg class="icon"><use href="#mirror"/></svg>镜向2</li>
					<li><svg class="icon"><use href="#fillet"/></svg>圆角2</li>
					<li><button aria-label="Expand"><svg><use href="#expand"/></svg></button><svg class="icon"><use href="#cut-extrude"/></svg>切除-拉伸2</li>
					<li><button aria-label="Expand"><svg><use href="#expand"/></svg></button><svg class="icon"><use href="#forming"/></svg>成形工具1</li>
				</ul>
				<div class="rollback"></div>
				<button class="splitter" aria-label="Collapse panel"><i class="dot"></i></button>
			</aside>

			<div class="viewport">
				<svg viewBox="213 139 867 665" role="img" aria-label="Model">
					<defs>
						<linearGradient id="barrel" gradientUnits="userSpaceOnUse" x1="689" y1="414" x2="748" y2="498">
							<stop offset="0" stop-color="#d8d900"/>
							<stop offset=".3" stop-color="#e2e300"/>
							<stop offset=".6" stop-color="#cfd000"/>
							<stop offset=".85" stop-color="#a9aa00"/>
							<stop offset="1" stop-color="#868700"/>
						</linearGradient>
						<linearGradient id="skirt" gradientUnits="userSpaceOnUse" x1="748" y1="498" x2="767" y2="526">
							<stop offset="0" stop-color="#a3a400"/>
							<stop offset=".4" stop-color="#cdce00"/>
							<stop offset=".8" stop-color="#e6e700"/>
							<stop offset="1" stop-color="#eaeb00"/>
						</linearGradient>
						<radialGradient id="nose" gradientUnits="userSpaceOnUse" cx="579" cy="532" r="72">
							<stop offset="0" stop-color="#ffff3c"/>
							<stop offset=".25" stop-color="#ffff24"/>
							<stop offset=".42" stop-color="#eeef08"/>
							<stop offset=".62" stop-color="#d6d700"/>
							<stop offset="1" stop-color="#b4b500"/>
						</radialGradient>
						<radialGradient id="nose-skirt" gradientUnits="userSpaceOnUse" cx="583" cy="500" r="126">
							<stop offset=".68" stop-color="#a9aa00"/>
							<stop offset=".78" stop-color="#d9da00"/>
							<stop offset=".87" stop-color="#fbfc16"/>
							<stop offset="1" stop-color="#f6f700"/>
						</radialGradient>
						<radialGradient id="tail" gradientUnits="userSpaceOnUse" cx="796" cy="378" r="90">
							<stop offset="0" stop-color="#dcdd00"/>
							<stop offset=".5" stop-color="#d2d300"/>
							<stop offset=".78" stop-color="#aeaf00"/>
							<stop offset="1" stop-color="#6b6b00"/>
						</radialGradient>
						<radialGradient id="tail-skirt" gradientUnits="userSpaceOnUse" cx="832" cy="378" r="80">
							<stop offset=".58" stop-color="#7d7e00"/>
							<stop offset=".72" stop-color="#b1b200"/>
							<stop offset=".88" stop-color="#dfe000"/>
							<stop offset="1" stop-color="#e4e500"/>
						</radialGradient>
					</defs>
					<g stroke="#1d1d00" stroke-width="1.200" stroke-linejoin="round">
						<path fill="url(#tail-skirt)" d="M870 341.500Q878 343 886 337Q899 349 906 364Q913 380 911.500 391Q911 402 905 415Q895 435 873.500 451.500Q862 443 854.500 424Q868 415 875 403Q884 389 883 373Q881 357 870 341.500z"/>
						<path fill="url(#skirt)" d="M641.500 573L854.500 424Q862 443 873.500 451.500L661 601Q649 593 641.500 573z"/>
						<path fill="url(#nose-skirt)" d="M526.700 575Q561 592 583 591.700Q613 591 641.500 573Q649 593 661 601Q624 626 583 625.500Q545 625 508.300 602.700Q521 593 526.700 575z"/>
						<path fill="url(#barrel)" d="M582.300 488.300L795.700 339Q832 369 854.500 424L641.500 573Q623 520 582.300 488.300z"/>
						<path fill="url(#tail)" d="M795.700 339Q817 323 835 322.500Q849 322 857 329Q864 334 870 341.500Q881 357 883 373Q884 389 875 403Q868 415 854.500 424Q832 369 795.700 339z"/>
						<path fill="url(#nose)" d="M582.300 488.300Q561 500 548 520Q528 551 526.700 575Q561 592 583 591.700Q613 591 641.500 573Q623 520 582.300 488.300z"/>
					</g>
					<g stroke="#1414b8" fill="#1414b8">
						<path d="M723 491L721 472" stroke="#44440f"/>
						<path d="M724 491l10-6M718.500 491.500h10M723.500 486.500v10M720 488l7 7M727 488l-7 7" fill="none"/>
						<path d="M720.500 467l2.500 6h-5zM738 482l-4 6-3.500-3.500z"/>
					</g>
				</svg>
			</div>
		</div>
	</main>
</body>
</html>
```

FILE: styles.css
```css
* {
  box-sizing: border-box;
}

body {
  margin: 0;
  min-height: 100vh;
  display: flex;
  flex-direction: column;
  background: #f7f7f7;
  color: #1a1a1a;
  font-family: "Open Sans", "Noto Sans CJK SC", sans-serif;
  font-size: 13px;
}

button {
  border: none;
  background: none;
  padding: 0;
  margin: 0;
  color: inherit;
  font: inherit;
  white-space: nowrap;
}

button:disabled {
  color: #b9b9b9;
}

svg {
  display: block;
  flex: none;
}

.sprite {
  position: absolute;
  width: 0;
  height: 0;
}

.icon, .icon-lg {
  stroke-width: 0.8;
}

.icon {
  width: 18px;
  height: 18px;
}

.icon-lg {
  width: 20px;
  height: 20px;
}

/* menu bar */
.menubar {
  display: flex;
  align-items: center;
  height: 37px;
  border-top: 1px solid #8a8a8a;
  border-bottom: 1px solid #8a8a8a;
}

.logo {
  display: flex;
  align-items: center;
  gap: 4px;
  width: 127px;
  padding-left: 4px;
  color: #c8372d;
  font-size: 12px;
  font-style: italic;
}

.logo svg {
  width: 20px;
  height: 20px;
}

.menus {
  display: flex;
}

.menus button {
  padding: 0 7px;
}

.pin {
  padding: 0 5px 0 3px;
}

.quick {
  display: flex;
  align-items: center;
  align-self: stretch;
  padding-left: 15px;
  border-left: 1px solid #c8c8c8;
}

.tool {
  display: flex;
  justify-content: center;
  align-items: center;
  width: 30px;
  height: 30px;
}

.drop {
  display: flex;
  justify-content: center;
  align-items: center;
  width: 13px;
  height: 30px;
  color: #444;
}

.drop svg, .more {
  width: 8px;
  height: 8px;
}

.select-tool {
  display: flex;
  margin-left: 2px;
  border: 1px solid #8c8c8c;
}

.pressed {
  background: #b1b1b1;
}

/* ribbon */
.ribbon {
  display: flex;
  height: 75px;
  border-bottom: 1px solid #a5a5a5;
}

.group {
  display: flex;
  border-right: 1px solid #cfcfcf;
}

.group:last-child {
  border-right: none;
}

.first {
  padding-left: 5px;
}

.col {
  display: flex;
  flex-direction: column;
  padding-right: 2px;
}

.col:last-child {
  padding-right: 5px;
}

.small {
  display: flex;
  align-items: center;
  gap: 4px;
  height: 24px;
  padding: 0 6px 0 4px;
}

.big {
  display: flex;
  flex-direction: column;
  align-items: center;
  width: 50px;
  padding-top: 4px;
  line-height: 17px;
}

.big .icon-lg {
  margin-bottom: 1px;
}

.narrow {
  width: 37px;
}

.more {
  margin-top: 16px;
}

/* command tabs and view toolbar */
.workspace {
  flex: 1;
  display: flex;
  flex-direction: column;
  background:
    linear-gradient(to bottom, rgba(253,253,253,0) 62%, #fdfdfd 79%),
    radial-gradient(ellipse 93% 62% at 20% 0, #fefefe 64%, #f2f4f8 82%, #dfe2eb 105%, #dadde8 130%);
}

.tabrow {
  display: flex;
  height: 27px;
}

.tabs {
  display: flex;
}

.tabs button {
  padding: 0 11px;
  border-right: 1px solid #8e8e8e;
  border-bottom: 1px solid #8e8e8e;
  background: #d2d2d2;
  color: #333;
  font-size: 14px;
}

.tabs .latin {
  font-size: 13px;
}

.tabs .active {
  background: #fafafa;
  border-bottom-color: #fafafa;
}

.viewbar {
  display: flex;
  align-items: center;
  padding-left: 14px;
}

.viewbar button {
  display: flex;
  justify-content: center;
  width: 24px;
}

.viewbar .drop {
  width: 13px;
  height: auto;
  color: #888;
}

/* feature tree panel */
.body {
  flex: 1;
  display: flex;
}

.sidebar {
  position: relative;
  flex: none;
  width: 213px;
  padding-top: 3px;
  border-right: 1px solid #8a8a8a;
  background: #f5f5f5;
  font-size: 14px;
}

.grip {
  display: flex;
  justify-content: center;
  align-items: center;
  height: 19px;
  border-top: 1px solid #c0c0c0;
  border-bottom: 1px solid #d4d4d4;
}

.dot {
  width: 6px;
  height: 6px;
  border: 1px solid #a0a0a0;
  border-radius: 50%;
  background: #d5d5d5;
}

.panel-tabs {
  display: flex;
  height: 24px;
  margin-top: 4px;
  padding-left: 2px;
}

.panel-tabs button {
  display: flex;
  justify-content: center;
  align-items: center;
  width: 37px;
  border: 1px solid #9a9a9a;
  border-left: none;
  background: #d0d0d0;
}

.panel-tabs .active {
  border-color: #f9f9f9 #9a9a9a #f9f9f9 #f9f9f9;
  background: #f9f9f9;
}

.panel-tabs .next {
  width: 26px;
  border: none;
  background: none;
}

.next svg {
  width: 8px;
  height: 12px;
}

.filter {
  display: flex;
  align-items: center;
  height: 28px;
  margin: 1px 5px;
  padding-left: 1px;
  border: 1px solid #cdcdcd;
}

.filter input {
  flex: 1;
  min-width: 0;
  border: none;
  background: none;
  outline: none;
  font: inherit;
}

.tree {
  margin: 0;
  padding: 0;
  list-style: none;
  overflow: hidden;
}

.tree li {
  display: flex;
  align-items: center;
  gap: 4px;
  height: 22px;
  padding-left: 24px;
  white-space: nowrap;
}

.tree .root {
  padding-left: 4px;
  gap: 3px;
}

.tree button {
  width: 8px;
  margin: 0 2px 0 -18px;
}

.tree button + .icon {
  margin-left: 4px;
}

.tree button svg {
  width: 8px;
  height: 8px;
}

.rollback {
  height: 4px;
  margin: 2px 2px 0 1px;
  background: #4a86b0;
}

.splitter {
  position: absolute;
  top: calc(50% + 16px);
  left: 100%;
  display: flex;
  justify-content: center;
  align-items: center;
  width: 11px;
  height: 46px;
  border: 1px solid #8a8a8a;
  border-left: none;
  background: #f9f9f9;
}

.viewport {
  flex: 1;
  min-width: 0;
}

.viewport svg {
  width: 100%;
}
```
